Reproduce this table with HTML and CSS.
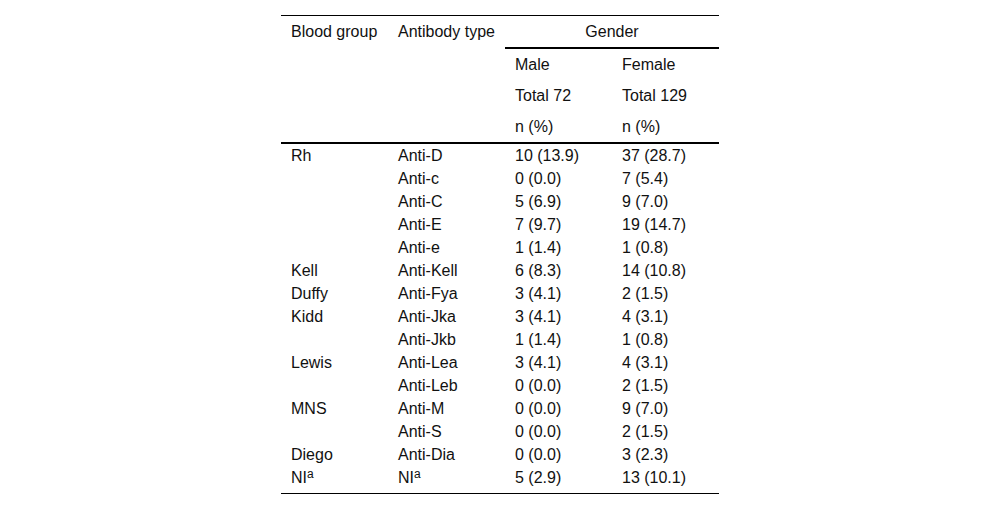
FILE: index.html
```html
<!DOCTYPE html>
<html>
<head>
<meta charset="utf-8">
<link rel="stylesheet" href="styles.css">
</head>
<body>
<table class="tbl">
  <colgroup>
    <col class="c1"><col class="c2"><col class="c3"><col class="c4">
  </colgroup>
  <thead>
    <tr>
      <th class="hd hd-last" rowspan="4">Blood group</th>
      <th class="hd hd-last" rowspan="4">Antibody type</th>
      <th class="hd gender" colspan="2">Gender</th>
    </tr>
    <tr><th class="hd">Male</th><th class="hd">Female</th></tr>
    <tr><th class="hd">Total 72</th><th class="hd">Total 129</th></tr>
    <tr><th class="hd hd-last">n (%)</th><th class="hd hd-last">n (%)</th></tr>
  </thead>
  <tbody>
    <tr><td>Rh</td><td>Anti-D</td><td>10 (13.9)</td><td>37 (28.7)</td></tr>
    <tr><td></td><td>Anti-c</td><td>0 (0.0)</td><td>7 (5.4)</td></tr>
    <tr><td></td><td>Anti-C</td><td>5 (6.9)</td><td>9 (7.0)</td></tr>
    <tr><td></td><td>Anti-E</td><td>7 (9.7)</td><td>19 (14.7)</td></tr>
    <tr><td></td><td>Anti-e</td><td>1 (1.4)</td><td>1 (0.8)</td></tr>
    <tr><td>Kell</td><td>Anti-Kell</td><td>6 (8.3)</td><td>14 (10.8)</td></tr>
    <tr><td>Duffy</td><td>Anti-Fya</td><td>3 (4.1)</td><td>2 (1.5)</td></tr>
    <tr><td>Kidd</td><td>Anti-Jka</td><td>3 (4.1)</td><td>4 (3.1)</td></tr>
    <tr><td></td><td>Anti-Jkb</td><td>1 (1.4)</td><td>1 (0.8)</td></tr>
    <tr><td>Lewis</td><td>Anti-Lea</td><td>3 (4.1)</td><td>4 (3.1)</td></tr>
    <tr><td></td><td>Anti-Leb</td><td>0 (0.0)</td><td>2 (1.5)</td></tr>
    <tr><td>MNS</td><td>Anti-M</td><td>0 (0.0)</td><td>9 (7.0)</td></tr>
    <tr><td></td><td>Anti-S</td><td>0 (0.0)</td><td>2 (1.5)</td></tr>
    <tr><td>Diego</td><td>Anti-Dia</td><td>0 (0.0)</td><td>3 (2.3)</td></tr>
    <tr class="last"><td>NI<sup>a</sup></td><td>NI<sup>a</sup></td><td>5 (2.9)</td><td>13 (10.1)</td></tr>
  </tbody>
</table>
</body>
</html>
```
FILE: styles.css
```css
html, body {
  margin: 0;
  padding: 0;
  background: #fff;
}
body {
  padding-top: 15px;
  font-family: "Liberation Sans", Arial, sans-serif;
  font-size: 16px;
  color: #111;
}
.tbl {
  margin: 0 auto;
  width: 438px;
  table-layout: fixed;
  border-collapse: separate;
  border-spacing: 0;
  border-top: 1px solid #000;
  border-bottom: 1px solid #000;
}
.c1 { width: 107px; }
.c2 { width: 117px; }
.c3 { width: 107px; }
.c4 { width: 107px; }
.hd {
  font-weight: normal;
  text-align: left;
  vertical-align: top;
  padding: 6px 10px;
  line-height: 19px;
  white-space: nowrap;
}
.gender {
  text-align: center;
  border-bottom: 2px solid #000;
}
.hd-last {
  border-bottom: 2px solid #000;
}
td {
  padding: 2px 10px;
  line-height: 19px;
  white-space: nowrap;
  vertical-align: top;
}
.last td {
  padding-bottom: 6px;
}
sup {
  font-size: 12px;
  line-height: 0;
  vertical-align: 5px;
}
```
